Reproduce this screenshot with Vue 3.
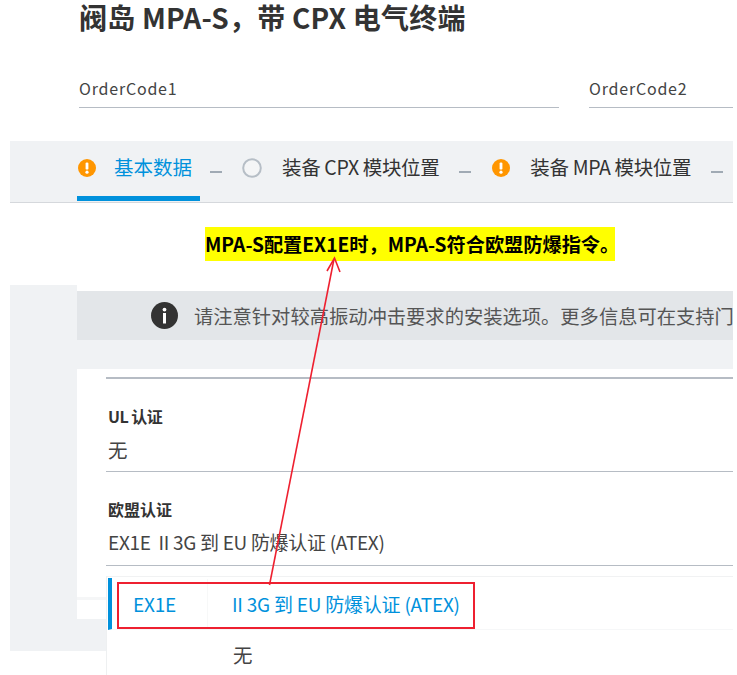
<script setup>
const tabs = [
  { label: '基本数据', state: 'warn', active: true },
  { label: '装备 CPX 模块位置', state: 'empty' },
  { label: '装备 MPA 模块位置', state: 'warn' }
]
</script>

<template>
  <div class="page">
    <h1 class="title">阀岛 MPA-S，带 CPX 电气终端</h1>

    <div class="fields">
      <div class="field first">OrderCode1</div>
      <div class="field second">OrderCode2</div>
    </div>

    <nav class="tabs">
      <div v-for="tab in tabs" :key="tab.label" class="tab-wrap">
        <div class="tab" :class="[tab.state, { active: tab.active }]">
          <svg v-if="tab.state === 'warn'" class="state" viewBox="0 0 18 18" width="18" height="18">
            <circle cx="9" cy="9" r="9" fill="#ff9600" />
            <rect x="7.6" y="3.4" width="2.8" height="7.2" rx="1.2" fill="#fff" />
            <circle cx="9" cy="13.2" r="1.6" fill="#fff" />
          </svg>
          <svg v-else class="state" viewBox="0 0 20 20" width="20" height="20">
            <circle cx="10" cy="10" r="8.8" fill="#f4f5f6" stroke="#b6bec6" stroke-width="2" />
          </svg>
          <span class="tab-label">{{ tab.label }}</span>
        </div>
        <span class="dash"></span>
      </div>
    </nav>

    <div class="note-row">
      <div class="note">MPA-S配置EX1E时，MPA-S符合欧盟防爆指令。</div>
    </div>

    <section class="panel">
      <div class="gutter"></div>
      <div class="column">
        <div class="notice">
          <svg class="info" viewBox="0 0 27 27" width="27" height="27">
            <circle cx="13.5" cy="13.5" r="13.5" fill="#333" />
            <circle cx="13.5" cy="7.6" r="1.9" fill="#fff" />
            <rect x="12" y="11" width="3" height="10.5" fill="#fff" />
          </svg>
          <span class="notice-text">请注意针对较高振动冲击要求的安装选项。更多信息可在支持门</span>
        </div>
        <div class="band"></div>
        <div class="card">
          <div class="rows">
            <div class="row ul">
              <div class="row-label">UL 认证</div>
              <div class="row-value">无</div>
            </div>
            <div class="row eu">
              <div class="row-label">欧盟认证</div>
              <div class="row-value small">EX1E&nbsp; II 3G 到 EU 防爆认证 (ATEX)</div>
            </div>
          </div>
        </div>
        <div class="thin"></div>
        <div class="white"></div>
        <div class="tail"></div>
      </div>
    </section>

    <div class="menu">
      <div class="option selected">
        <span class="code">EX1E</span>
        <span class="desc">II 3G 到 EU 防爆认证 (ATEX)</span>
      </div>
      <div class="option plain">
        <span class="code"></span>
        <span class="desc none">无</span>
      </div>
    </div>

    <div class="callout"></div>
    <svg class="arrow" viewBox="0 0 733 675" width="733" height="675">
      <path d="M269.5 585 L334 259" fill="none" stroke="#ee2030" stroke-width="1.6" />
      <path d="M327 271 L334.5 258 L340 272" fill="none" stroke="#ee2030" stroke-width="1.6" />
    </svg>
  </div>
</template>

<style scoped>
.page {
  position: relative;
  width: 733px;
  height: 675px;
  overflow: hidden;
  background: #fff;
  color: #333;
  font-family: "Noto Sans CJK SC", "Noto Sans", sans-serif;
}
.title {
  margin: 0;
  padding: 0 0 0 79px;
  height: 34px;
  font-size: 28px;
  line-height: 34px;
  font-weight: 700;
  white-space: nowrap;
  letter-spacing: 0.2px;
}
.fields {
  display: flex;
  gap: 30px;
  margin: 40px 0 0 79px;
}
.field {
  height: 33px;
  line-height: 28px;
  font-size: 16px;
  letter-spacing: 0.8px;
  color: #444;
  border-bottom: 1px solid #b6bcc4;
}
.first { width: 480px; }
.second { width: 144px; }
.tabs {
  display: flex;
  margin: 33px 0 0 10px;
  padding-left: 67px;
  height: 61px;
  background: #f0f2f4;
  border-bottom: 1px solid #d5d8dc;
  overflow: hidden;
}
.tab-wrap {
  display: flex;
  align-items: flex-start;
}
.tab {
  display: flex;
  align-items: center;
  gap: 20px;
  height: 60px;
  padding: 0 10px 2px 0;
  box-sizing: border-box;
  border-bottom: 5px solid transparent;
  font-size: 19.5px;
  letter-spacing: -0.35px;
  white-space: nowrap;
}
.tab.warn { padding-left: 1px; }
.tab.active {
  gap: 18px;
  padding-right: 8px;
  border-bottom-color: #0091dc;
  color: #0091dc;
  letter-spacing: 0;
}
.tab-label { padding-bottom: 2px; }
.dash {
  width: 12px;
  height: 2px;
  margin: 30px 20px 0 10px;
  background: #a0aab4;
}
.note-row {
  display: flex;
  margin: 24px 0 0 205px;
}
.note {
  width: 410px;
  height: 34px;
  line-height: 35px;
  background: #ff0;
  color: #000;
  font-size: 19.2px;
  font-weight: 700;
  white-space: nowrap;
}
.panel {
  display: flex;
  margin: 24px 0 0 10px;
  height: 366px;
}
.gutter {
  width: 67px;
  background: #f0f2f4;
}
.column {
  width: 656px;
  padding-top: 6px;
}
.notice {
  display: flex;
  align-items: center;
  gap: 16px;
  height: 49px;
  padding-left: 74px;
  background: #e3e6e9;
  overflow: hidden;
  white-space: nowrap;
}
.info { flex: none; }
.notice-text {
  font-size: 19.3px;
  color: #555;
}
.band {
  height: 29px;
  background: #f0f2f4;
}
.card {
  height: 228px;
  padding: 8px 0 0 29px;
  box-sizing: border-box;
  background: #fff;
}
.rows { border-top: 2px solid #b6bcc4; }
.row {
  border-bottom: 1px solid #b6bcc4;
  padding-left: 2px;
  box-sizing: border-box;
}
.ul { height: 93px; padding-top: 25px; }
.eu { height: 94px; padding-top: 25px; }
.row-label {
  height: 24px;
  line-height: 24px;
  font-size: 16px;
  font-weight: 700;
  color: #333;
}
.ul .row-label { letter-spacing: -0.5px; }
.row-value {
  margin-top: 8px;
  height: 28px;
  line-height: 28px;
  font-size: 19.5px;
  color: #444;
}
.row-value.small {
  font-size: 19px;
  letter-spacing: -0.3px;
  line-height: 26px;
}
.thin {
  height: 3px;
  background: #f5f6f7;
}
.white {
  height: 19px;
  background: #fff;
}
.tail {
  height: 32px;
  background: #f0f2f4;
}
.menu {
  position: absolute;
  left: 106px;
  top: 576px;
  width: 627px;
  height: 99px;
  box-sizing: border-box;
  padding-top: 1px;
  background: #fff;
  border-top: 1px solid #f1f2f3;
  border-left: 1px solid #eef0f1;
}
.option {
  display: flex;
  align-items: center;
}
.selected {
  height: 51px;
  margin-left: 1px;
  border-left: 4px solid #0091dc;
  border-bottom: 1px solid #f6f7f8;
  color: #0091dc;
  font-size: 19px;
  letter-spacing: -0.22px;
}
.plain {
  height: 48px;
  font-size: 19.5px;
  color: #444;
}
.code {
  flex: none;
  box-sizing: border-box;
  width: 96px;
  padding-left: 21px;
  line-height: 50px;
  border-right: 1px solid #f7f8f8;
}
.plain .code { width: 126px; border-right: 0; }
.selected .code { width: 96px; }
.desc { padding-left: 24px; white-space: nowrap; }
.none { padding-left: 0; }
.callout {
  position: absolute;
  left: 117px;
  top: 582px;
  width: 358px;
  height: 47px;
  box-sizing: border-box;
  border: 2px solid #ee2030;
}
.arrow {
  position: absolute;
  left: 0;
  top: 0;
  pointer-events: none;
}
</style>

<style>
html, body { margin: 0; background: #fff; }
</style>
